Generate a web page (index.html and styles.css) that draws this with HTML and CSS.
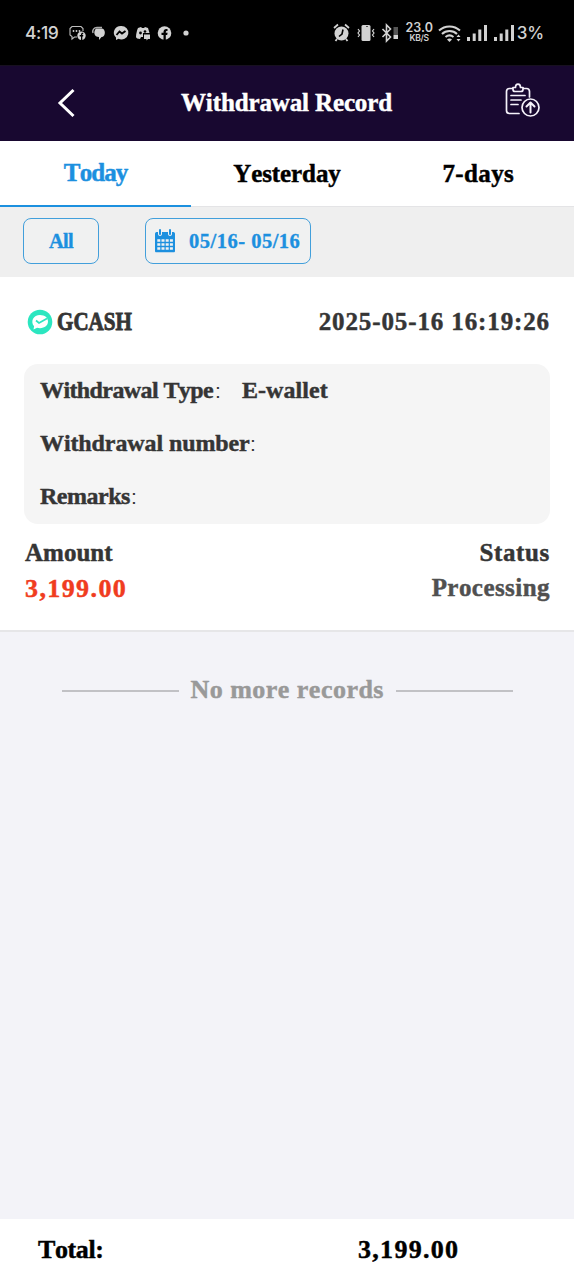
FILE: index.html
```html
<!DOCTYPE html>
<html lang="en">
<head>
<meta charset="utf-8">
<title>Withdrawal Record</title>
<link rel="stylesheet" href="styles.css">
</head>
<body>
<div class="screen">
  <div class="status-bar">
    <span class="clock">4:19</span>
    <svg class="notices" width="124" height="20" viewBox="0 0 124 20" fill="#d2d2d2">
      <path d="M8 14H5.500L3 16v-2.500L1 12V5.500L3 3.500h9l2 2V8" fill="none" stroke="#bdbdbd" stroke-width="1.100"/>
      <circle cx="4.500" cy="8" r=".9"/><circle cx="7.500" cy="8" r=".9"/><circle cx="10.500" cy="8" r=".9"/>
      <circle cx="12.500" cy="12.800" r="4.200"/><path d="M12 17v-3.500h-1.300V12H12c0-2 .8-2.500 2.200-2.300V11c-.8 0-.9.200-.9 1h1l-.2 1.500h-.8V17z" fill="#000"/>
      <path d="M27 5.500h5.500c4.500 0 4.500 8.500 0 8.500l-2.500 3v-3c-5 0-6-5-3-8.500z"/><path d="M24 10c-1-3 1-5.500 4-5.500h5" stroke="#aaa" stroke-width="1.500" fill="none"/>
      <path d="M52 3a7 6.700 0 0 0-5 11.500V17l2.500-1.200A7 6.700 0 1 0 52 3z"/><path d="M47.500 12l3-3.500 2.500 2 3.500-2.500" fill="none" stroke="#000" stroke-width="1.900"/>
      <path d="M69 5l3-1 1 1h2l1-1 3 1 1.500 5H74v4h-2l-1 2c-2 0-4-1-4-2 0-3 1-7 2-9z"/><circle cx="71.500" cy="10" r="1.400" fill="#000"/><circle cx="76" cy="8.500" r="1.300" fill="#000"/><path d="M75 11.500h6V16h-2l-1.500 1.500V16H75z"/>
      <circle cx="95.500" cy="10" r="6.800"/><path d="M94.500 17v-5h-2v-2.300h2c-.1-3 1-4.100 4-3.700v2c-1.500 0-1.700.2-1.700 1.700h1.800l-.4 2.300h-1.400v5z" fill="#000"/>
      <circle cx="117" cy="10" r="2.600"/>
    </svg>
    <div class="system">
      <svg width="66" height="20" viewBox="0 0 66 20" fill="#d2d2d2">
        <circle cx="8.500" cy="10.500" r="7"/><path d="M1 5l4-3.500M16 5l-4-3.500M4 16l-1.500 2M13 16l1.500 2" stroke="#d2d2d2" stroke-width="1.800"/><path d="M10 6.500L9 11l-3 2.500" fill="none" stroke="#000" stroke-width="1.600"/>
        <rect x="28.500" y="2" width="9" height="16" rx="1.500"/><path d="M33 3.500h2" stroke="#555"/><path d="M25 6l1.500 2-1.500 2 1.500 2-1.500 2M41 6l-1.500 2 1.500 2-1.500 2 1.500 2" fill="none" stroke="#d2d2d2" stroke-width="1.200"/>
        <path d="M49.500 6l8 8-4 4V2l4 4-8 8" fill="none" stroke="#d2d2d2" stroke-width="1.600"/><rect x="60.500" y="4" width="4.500" height="8" fill="#555"/><rect x="60.500" y="12" width="4.500" height="4"/>
      </svg>
      <div class="speed"><span>23.0</span><small>KB/S</small></div>
      <svg class="radio" width="78" height="20" viewBox="0 0 78 20" fill="#d2d2d2">
        <path d="M1 7.500c6-5.500 15-5.500 21 0M4 11c4-4 11-4 15 0M7.500 14c2.500-2 5.500-2 8 0" fill="none" stroke="#d2d2d2" stroke-width="2"/><path d="M9 16.500a4 4 0 0 1 5 0l-2.500 2.500z"/><path d="M18.500 14l2-2.500 2 2.500zM18.500 16l2 2.500 2-2.500z"/>
        <path d="M29 14h3v4h-3zM34.700 10.500h3V18h-3zM40.300 6.500h3V18h-3zM46 2h3v16h-3zM56 14h3v4h-3zM61.700 10.500h3V18h-3zM67.300 6.500h3V18h-3zM73 2h3v16h-3z"/>
      </svg>
      <span class="battery">3%</span>
    </div>
  </div>

  <header class="header">
    <svg class="back" width="20" height="30" viewBox="0 0 20 30"><path d="M16.500 2L3 15l13.500 13" fill="none" stroke="#fff" stroke-width="3"/></svg>
    <h1 class="title">Withdrawal Record</h1>
    <svg class="report" width="36" height="38" viewBox="0 0 36 38" fill="none" stroke="#f5f2fa" stroke-width="1.700" stroke-linecap="round" stroke-linejoin="round">
      <path d="M7 6.500H4.500c-1.700 0-3 1.300-3 3v19c0 1.700 1.300 3 3 3H14M19 6.500h2.500c1.700 0 3 1.300 3 3V15M8 5.500h2.500c0-4.500 5-4.500 5 0H18v2c0 1.500-1 2-2 2h-6c-1 0-2-.5-2-2zM6 13.500h14M6 18h10M6 22.500h7"/>
      <circle cx="25.500" cy="25.500" r="8.500"/><path d="M25.500 30.500v-10M21.500 24.500l4-4 4 4" stroke-width="2"/>
    </svg>
  </header>

  <nav class="tabs">
    <a class="tab tab-active">Today</a>
    <a class="tab tab-yesterday">Yesterday</a>
    <a class="tab tab-week">7-days</a>
  </nav>

  <div class="filters">
    <button class="filter filter-all">All</button>
    <button class="filter filter-date">
      <svg width="22" height="24" viewBox="0 0 22 24" fill="#1c90df"><path d="M2.500 3H4v2c0 2.500 4 2.500 4 0V3h6v2c0 2.500 4 2.500 4 0V3h1.500C20.500 3 21 4 21 5v17c0 .8-.5 1.300-1.300 1.300H2.300C1.500 23.300 1 22.800 1 22V5c0-1 .5-2 1.500-2z"/><path d="M6 1v4M16 1v4" stroke="#1c90df" stroke-width="2" stroke-linecap="round"/><path d="M3.300 11.500h15.600M3.300 15.500h15.600M3.300 19.500h15.600" stroke="#eff1f2" stroke-width="2.700" stroke-dasharray="3 1.200"/></svg>
      <span>05/16- 05/16</span>
    </button>
  </div>

  <main class="record">
    <div class="record-head">
      <div class="wallet">
        <svg width="26" height="26" viewBox="0 0 26 26"><circle cx="13" cy="13" r="12.300" fill="#2be6c0"/><path d="M13 6c4.800 0 8 2.800 8 6.600s-3.200 6.600-8 6.600c-1 0-2-.1-2.900-.4L6.500 20.500l.6-3.200C3 12.500 6.500 6 13 6z" fill="#fff"/><path d="M9 11.500l3 2.500 8-4.500" fill="none" stroke="#2be6c0" stroke-width="1.700"/></svg>
        <span class="wallet-name">GCASH</span>
      </div>
      <time class="time">2025-05-16 16:19:26</time>
    </div>
    <div class="details">
      <div class="detail"><span class="label label-type">Withdrawal Type</span><span class="colon">:</span><span class="value">E-wallet</span></div>
      <div class="detail"><span class="label label-number">Withdrawal number</span><span class="colon">:</span></div>
      <div class="detail"><span class="label label-remarks">Remarks</span><span class="colon">:</span></div>
    </div>
    <div class="summary">
      <div class="summary-col"><span class="caption">Amount</span><span class="amount">3,199.00</span></div>
      <div class="summary-col summary-right"><span class="caption status">Status</span><span class="state">Processing</span></div>
    </div>
  </main>

  <div class="end"><i class="rule"></i><span class="end-text">No more records</span><i class="rule"></i></div>

  <footer class="total"><span class="total-label">Total:</span><span class="total-value">3,199.00</span></footer>
</div>
</body>
</html>
```
FILE: styles.css
```css
* { box-sizing: border-box; }
body { margin: 0; background: #f3f3f8; font-family: "Liberation Serif", serif; font-weight: 700; font-kerning: none; }
span, time, h1, a { white-space: nowrap; }
svg { display: block; flex: none; }
.screen { width: 574px; height: 1280px; display: flex; flex-direction: column; color: #353535; overflow: hidden; -webkit-text-stroke: .45px currentColor; }

.status-bar { height: 65px; flex: none; background: #000; display: flex; align-items: center; padding: 0 30px 0 25px; color: #d2d2d2; font-family: Inter, sans-serif; font-weight: 500; -webkit-text-stroke: 0; }
.clock { width: 44px; font-size: 17.500px; letter-spacing: -.4px; }
.system { margin-left: auto; display: flex; align-items: center; }
.speed { width: 27px; margin-left: 7px; margin-right: 5px; display: flex; flex-direction: column; align-items: center; font-size: 12.500px; line-height: 10px; font-weight: 600; letter-spacing: -.2px; }
.speed small { font-size: 8.500px; line-height: 10px; }
.battery { font-size: 17px; letter-spacing: -.1px; margin-left: 1px; }

.header { height: 76px; flex: none; background: #180830; display: grid; grid-template-columns: 89px 1fr 46px; align-items: center; border-top: 1px solid #171020; padding: 0 24px 0 56px; }
.title { margin: 0 0 0 36px; justify-self: start; color: #fff; font-size: 25px; line-height: 30px; letter-spacing: -.13px; padding-bottom: 2px; }
.report { margin-left: 1px; margin-top: -5px; }
.back { margin-top: -2px; margin-left: 1px; }

.tabs { height: 66px; flex: none; display: grid; grid-template-columns: repeat(3, 1fr); background: #fff; border-bottom: 1px solid #e4e4e6; }
.tab { height: 67px; display: flex; align-items: center; justify-content: center; font-size: 25px; color: #000; padding-bottom: 2px; }
.tab-active { color: #1c90df; border-bottom: 3px solid #1c90df; padding-bottom: 0; letter-spacing: -.9px; }
.tab-yesterday { letter-spacing: -.1px; }
.tab-week { letter-spacing: .4px; }

.filters { height: 70px; flex: none; background: #efefef; display: flex; align-items: flex-start; gap: 46px; padding: 11px 23px; }
.filter { height: 46px; border: 1.500px solid #429fdb; border-radius: 8px; background: #f0f1f1; color: #1c90df; font: inherit; font-size: 20.500px; padding: 0; display: flex; align-items: center; -webkit-text-stroke: .35px currentColor; }
.filter-all { width: 76px; justify-content: center; letter-spacing: -.7px; }
.filter-date { width: 166px; padding-left: 8px; gap: 13px; letter-spacing: .5px; }

.record { height: 355px; flex: none; background: #fff; border-bottom: 2px solid #e6e6e8; padding: 30px 24px 0; }
.record-head { height: 30px; display: flex; justify-content: space-between; align-items: center; }
.wallet { display: flex; align-items: center; gap: 4px; padding-left: 3px; }
.wallet-name { width: 76px; font-size: 26px; transform: scaleX(.81); transform-origin: left; -webkit-text-stroke-width: .9px; }
.time { font-size: 25px; letter-spacing: .88px; }
.details { height: 160px; margin-top: 27px; padding: 0 16px; border-radius: 14px; background: #f5f5f5; display: grid; grid-template-rows: repeat(3, 53px); }
.detail { display: flex; align-items: center; font-size: 24px; }
.label-type { width: 175px; letter-spacing: -.6px; }
.label-number { width: 210px; letter-spacing: -.1px; }
.label-remarks { width: 91px; letter-spacing: -.5px; }
.colon { width: 27px; font-family: "Liberation Sans", sans-serif; font-weight: 400; font-size: 21px; -webkit-text-stroke: 0; }
.value { letter-spacing: .05px; }
.summary { display: flex; justify-content: space-between; padding: 11px 0 0 1px; font-size: 25px; }
.summary-col { display: flex; flex-direction: column; line-height: 36px; }
.summary-right { align-items: flex-end; line-height: 35px; }
.status { letter-spacing: .65px; }
.amount { color: #f03c20; font-size: 26px; letter-spacing: 1.400px; }
.state { color: #505050; letter-spacing: .45px; }

.end { display: flex; justify-content: center; align-items: center; gap: 12px; height: 36px; margin-top: 40px; color: #999; font-size: 26px; letter-spacing: .48px; }
.end-text { width: 193px; }
.rule { width: 117px; height: 2px; background: #c1c1c5; flex: none; margin-top: 1px; }

.total { height: 61px; margin-top: auto; flex: none; background: #fff; color: #000; display: grid; grid-template-columns: 320px 1fr; align-items: center; padding: 1px 0 0 38px; font-size: 26px; }
.total-label { letter-spacing: -.4px; }
.total-value { letter-spacing: 1.300px; }
```
